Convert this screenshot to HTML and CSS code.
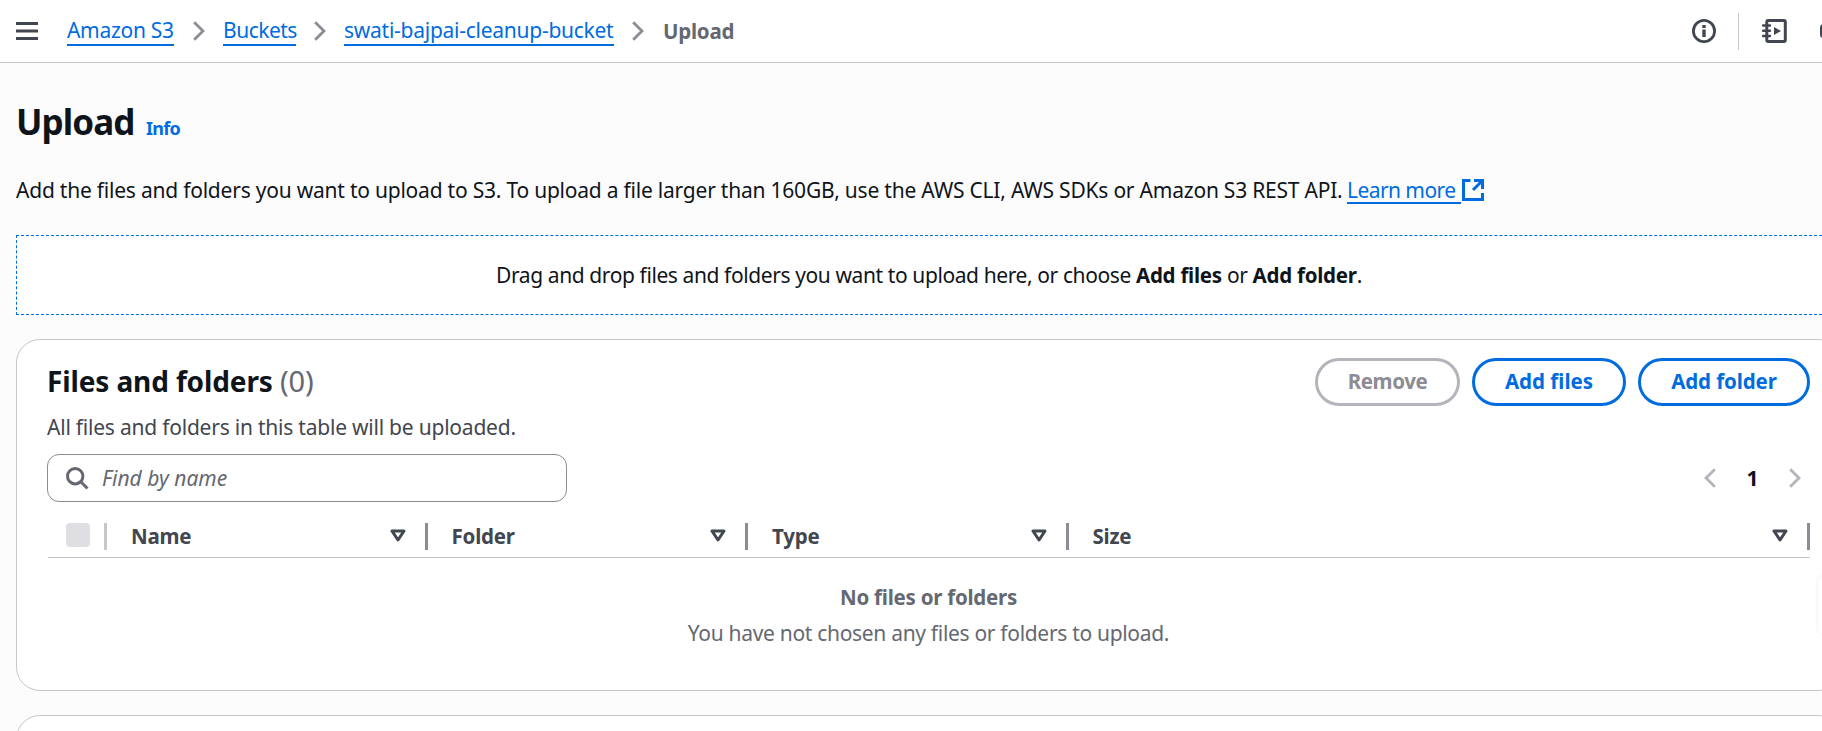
FILE: index.html
```html
<!DOCTYPE html>
<html lang="en">
<head>
<meta charset="utf-8">
<title>Upload objects - S3 bucket</title>
<link rel="stylesheet" href="styles.css">
</head>
<body>
<header class="topbar">
  <svg class="menu" width="22" height="18" viewBox="0 0 22 18"><path d="M0 1.500h22M0 9h22M0 16.500h22" stroke="#424650" stroke-width="3"/></svg>
  <nav class="crumbs">
    <a class="crumb c-s3">Amazon S3</a>
    <svg class="sep" width="12" height="20" viewBox="0 0 12 20"><path d="M1.200 1.200 10 10l-8.800 8.800"/></svg>
    <a class="crumb c-buckets">Buckets</a>
    <svg class="sep" width="12" height="20" viewBox="0 0 12 20"><path d="M1.200 1.200 10 10l-8.800 8.800"/></svg>
    <a class="crumb c-bucket">swati-bajpai-cleanup-bucket</a>
    <svg class="sep" width="12" height="20" viewBox="0 0 12 20"><path d="M1.200 1.200 10 10l-8.800 8.800"/></svg>
    <span class="current">Upload</span>
  </nav>
  <div class="tools">
    <svg width="24" height="24" viewBox="0 0 24 24"><circle cx="12" cy="12" r="10.600" fill="none" stroke="#424650" stroke-width="2.800"/><path d="M10.300 6h3.400v3h-3.400zM10.300 10.500h3.400V18h-3.400z" fill="#424650"/></svg>
    <span class="rule"></span>
    <svg width="25" height="24" viewBox="0 0 25 24"><rect x="4.800" y="1.500" width="18.500" height="21" rx="1.500" fill="none" stroke="#424650" stroke-width="3"/><path d="M1 6.500h7M1 11.800h7M1 17h7" stroke="#424650" stroke-width="2.400" stroke-linecap="round"/><path d="M12 8v8l7-4z" fill="#424650"/></svg>
    <svg class="cut" width="24" height="24" viewBox="0 0 24 24"><rect x="1.500" y="6.500" width="21" height="11" rx="2" fill="none" stroke="#424650" stroke-width="3"/></svg>
  </div>
</header>
<main>
  <div class="heading"><h1>Upload</h1><a class="info">Info</a></div>
  <p class="intro"><span class="intro-text">Add the files and folders you want to upload to S3. To upload a file larger than 160GB, use the AWS CLI, AWS SDKs or Amazon S3 REST API.</span><a class="learn">Learn more</a><svg width="22" height="22" viewBox="0 0 22 22"><path d="M8.500 1.500h-7v19h19V14M12 1.500h8.500V10M20 2 11 11" fill="none" stroke="#006ce0" stroke-width="3"/></svg></p>
  <div class="dropzone"><span>Drag and drop files and folders you want to upload here, or choose <b>Add files</b> or <b>Add folder</b>.</span></div>
  <section class="card files">
    <div class="card-head">
      <h2>Files and folders <span class="count">(0)</span></h2>
      <div class="actions">
        <button class="btn remove" disabled>Remove</button>
        <button class="btn add-files">Add files</button>
        <button class="btn add-folder">Add folder</button>
      </div>
    </div>
    <p class="sub">All files and folders in this table will be uploaded.</p>
    <div class="filter">
      <div class="search">
        <svg width="23" height="23" viewBox="0 0 23 23"><circle cx="9.200" cy="9.200" r="7.700"/><path d="m14.500 14.500 7 7"/></svg>
        <span class="placeholder">Find by name</span>
      </div>
      <div class="pager">
        <svg width="12" height="20" viewBox="0 0 12 20"><path d="M10.800 1.200 2 10l8.800 8.800"/></svg>
        <span class="page">1</span>
        <svg width="12" height="20" viewBox="0 0 12 20"><path d="M1.200 1.200 10 10l-8.800 8.800"/></svg>
      </div>
    </div>
    <div class="thead">
      <div class="th check"><span class="box"></span></div>
      <div class="th"><span>Name</span><svg class="sort" width="16" height="13" viewBox="0 0 16 13"><path d="M2 2h12L8 11z"/></svg></div>
      <div class="th"><span>Folder</span><svg class="sort" width="16" height="13" viewBox="0 0 16 13"><path d="M2 2h12L8 11z"/></svg></div>
      <div class="th"><span>Type</span><svg class="sort" width="16" height="13" viewBox="0 0 16 13"><path d="M2 2h12L8 11z"/></svg></div>
      <div class="th"><span>Size</span><svg class="sort" width="16" height="13" viewBox="0 0 16 13"><path d="M2 2h12L8 11z"/></svg></div>
    </div>
    <div class="empty">
      <b>No files or folders</b>
      <span>You have not chosen any files or folders to upload.</span>
    </div>
  </section>
  <section class="card next"></section>
  <div class="handle"></div>
</main>
</body>
</html>
```
FILE: styles.css
```css
* { box-sizing: border-box; }
body {
  margin: 0;
  background: #fcfcfd;
  color: #0f141a;
  font-family: "Noto Sans", sans-serif;
  font-size: 21px;
  line-height: 30px;
  letter-spacing: -0.22px;
  white-space: nowrap;
}
h1, h2, p { margin: 0; }
svg { display: block; flex: none; }
b { font-size: 20.5px; letter-spacing: -0.25px; }
.topbar {
  height: 63px;
  padding-left: 16px;
  background: #fff;
  border-bottom: 1px solid #c6c6cd;
  display: flex;
  align-items: center;
  overflow: hidden;
}
.menu { margin-right: 29px; }
.crumbs { display: flex; align-items: center; height: 62px; }
.crumb {
  color: #006ce0;
  border-bottom: 2px solid #006ce0;
  height: 29px;
  line-height: 27px;
}
.c-s3 { width: 107px; letter-spacing: -0.3px; }
.c-buckets { width: 73px; letter-spacing: -0.5px; }
.c-bucket { width: 270px; letter-spacing: -0.26px; }
.sep { margin: 0 18px; }
.c-s3 + .sep { margin-left: 19px; }
.sep path { fill: none; stroke: #8c8c94; stroke-width: 2.8; }
.current { color: #656871; font-weight: 700; font-size: 20.5px; letter-spacing: -0.25px; margin: -1px 0 0 1px; }
.tools { margin-left: auto; display: flex; align-items: center; }
.rule { width: 1px; height: 37px; background: #c6c6cd; margin: 0 23px 0 22px; }
.cut { margin: 0 -22px 0 33px; }

main { position: relative; height: 668px; padding-left: 16px; overflow: hidden; }
.heading { display: flex; align-items: baseline; height: 88px; padding-top: 35px; }
h1 { font-size: 35px; line-height: 48px; width: 130px; letter-spacing: -0.9px; }
.info { font-size: 18px; font-weight: 700; color: #006ce0; letter-spacing: -0.7px; }
.intro { display: flex; align-items: flex-start; height: 84px; padding-top: 24px; }
.intro-text { width: 1331px; }
.learn { width: 114px; height: 29px; color: #006ce0; border-bottom: 2px solid #006ce0; margin-right: 1px; letter-spacing: -0.57px; }
.intro svg { margin-top: 4px; }
.dropzone {
  width: 1826px;
  height: 80px;
  background: #fff;
  border: 1px dashed #006ce0;
  display: flex;
  align-items: center;
  justify-content: center;
  letter-spacing: -0.4px;
}
.card { width: 1826px; background: #fff; border: 1px solid #c6c6cd; border-radius: 24px; }
.files { margin-top: 24px; height: 352px; padding: 18px 31px 0 30px; }
.card-head { display: flex; justify-content: space-between; height: 48px; }
h2 { font-size: 28px; line-height: 46px; letter-spacing: -0.12px; }
.count { font-weight: 400; color: #656871; font-size: 29px; }
.actions { display: flex; gap: 12px; }
.btn {
  height: 48px;
  padding: 0 0 2px;
  border: 3px solid #006ce0;
  border-radius: 24px;
  background: #fff;
  color: #006ce0;
  font: 700 20.5px "Noto Sans", sans-serif;
}
.remove { width: 145px; color: #8c8c94; border-color: #b4b4bb; letter-spacing: -0.4px; }
.add-files { width: 154px; }
.add-folder { width: 172px; letter-spacing: -0.1px; }
.sub { color: #424650; padding-top: 6px; height: 48px; }
.filter { display: flex; justify-content: space-between; align-items: center; }
.search {
  width: 520px;
  height: 48px;
  border: 1px solid #8c8c94;
  border-radius: 12px;
  display: flex;
  align-items: center;
  padding-left: 18px;
}
.search path, .search circle { fill: none; stroke: #656871; stroke-width: 3; }
.placeholder { margin-left: 13px; font-style: italic; color: #656871; letter-spacing: 0; }
.pager { display: flex; align-items: center; padding-right: 9px; }
.pager path { fill: none; stroke: #b4b4bb; stroke-width: 2.8; }
.page { width: 73px; text-align: center; font-weight: 700; }
.thead {
  display: grid;
  grid-template-columns: 59px 320.500px 320.500px 320.500px 1fr;
  height: 56px;
  margin-left: 1px;
  border-bottom: 1px solid #c6c6cd;
  color: #424650;
  font-weight: 700;
  font-size: 20.5px;
  padding-top: 21px;
}
.th {
  height: 27px;
  border-right: 3px solid #8c8c94;
  display: flex;
  align-items: center;
  justify-content: space-between;
  padding: 0 19px 0 24px;
}
.th span { margin-top: -2px; }
.th.check { border-color: #c6c6cd; padding: 0 0 3px 18px; }
.th .box { width: 24px; height: 24px; margin: 0; border-radius: 4px; background: #dedee3; }
.sort { margin-top: -2px; }
.sort path { fill: none; stroke: #424650; stroke-width: 3; stroke-linejoin: round; }
.empty { display: flex; flex-direction: column; align-items: center; gap: 6px; padding-top: 24px; color: #656871; letter-spacing: -0.31px; }
.next { margin-top: 24px; height: 80px; }
.handle {
  position: absolute;
  left: 1818px;
  top: 513px;
  width: 48px;
  height: 58px;
  border-radius: 6px;
  background: #fff;
  box-shadow: 0 0 4px rgba(0, 7, 22, 0.08);
}
```
